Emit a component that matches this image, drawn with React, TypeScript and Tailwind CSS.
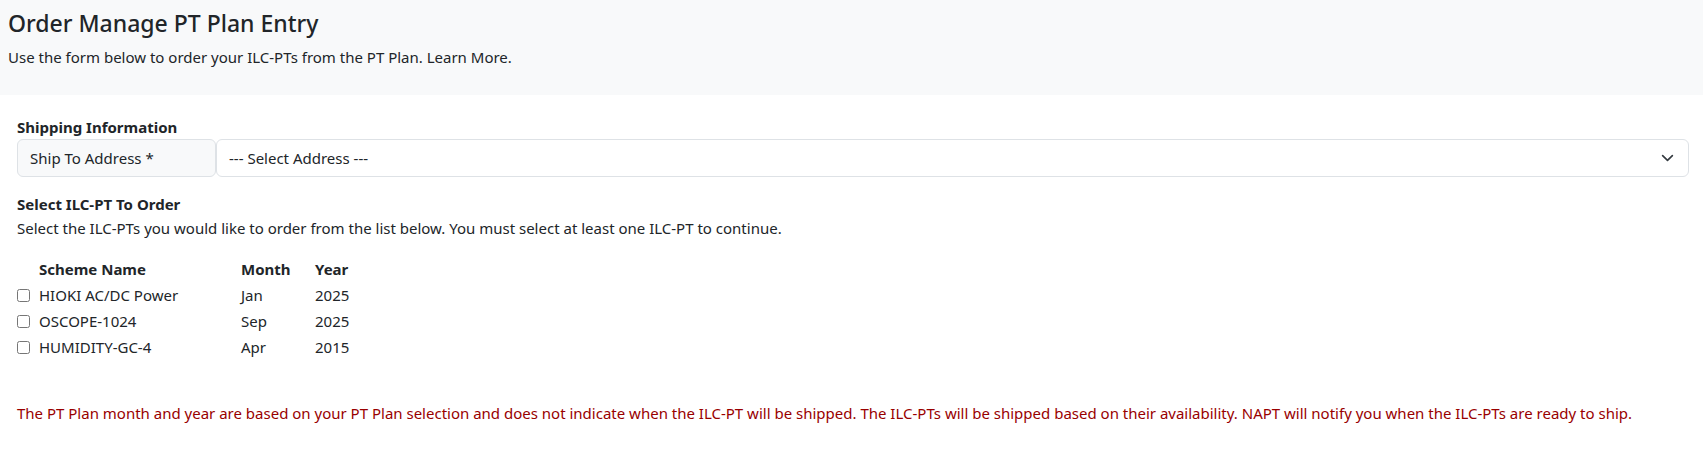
import React, { useState } from "react";

const schemes = [
  { name: "HIOKI AC/DC Power", month: "Jan", year: "2025" },
  { name: "OSCOPE-1024", month: "Sep", year: "2025" },
  { name: "HUMIDITY-GC-4", month: "Apr", year: "2015" },
];

export default function App() {
  const [checked, setChecked] = useState<boolean[]>([false, false, false]);

  return (
    <div className="min-h-screen bg-white text-[#212529] font-['Noto_Sans',sans-serif]">
      <header className="bg-[#f8f9fa] px-2 pt-[9px] pb-[26px]">
        <h1 className="text-[23px] leading-[28px] font-medium">Order Manage PT Plan Entry</h1>
        <p className="mt-[8px] text-[15px] leading-6">
          Use the form below to order your ILC-PTs from the PT Plan. Learn More.
        </p>
      </header>

      <main className="pl-[17px] pr-[14px] pt-[20px]">
        <h2 className="text-[15px] leading-6 font-bold">Shipping Information</h2>
        <div className="flex h-[38px]">
          <div className="flex w-[199px] items-center rounded-md border border-[#dee2e6] bg-[#f8f9fa] px-3 text-[15px]">
            Ship To Address *
          </div>
          <div className="relative flex flex-1 items-center rounded-md border border-[#dee2e6] bg-white px-3 text-[15px]">
            --- Select Address ---
            <svg
              className="absolute right-[14px] top-1/2 -translate-y-1/2"
              width="13"
              height="13"
              viewBox="0 0 16 16"
              fill="none"
              stroke="#343a40"
              strokeWidth="2"
              strokeLinecap="round"
              strokeLinejoin="round"
            >
              <path d="m2 5 6 6 6-6" />
            </svg>
          </div>
        </div>

        <h2 className="mt-[15px] text-[15px] leading-6 font-bold">Select ILC-PT To Order</h2>
        <p className="text-[15px] leading-6">
          Select the ILC-PTs you would like to order from the list below. You must select at least one ILC-PT to continue.
        </p>

        <div className="mt-[16px] grid w-max grid-cols-[22px_202px_74px_60px] text-[15px] leading-[26px]">
          <div />
          <div className="font-bold">Scheme Name</div>
          <div className="font-bold">Month</div>
          <div className="font-bold">Year</div>
          {schemes.map((s, i) => (
            <React.Fragment key={s.name}>
              <div className="flex items-center">
                <input
                  type="checkbox"
                  className="h-[13px] w-[13px] accent-[#0d6efd]"
                  checked={checked[i]}
                  onChange={() => setChecked(checked.map((c, j) => (j === i ? !c : c)))}
                />
              </div>
              <div>{s.name}</div>
              <div>{s.month}</div>
              <div>{s.year}</div>
            </React.Fragment>
          ))}
        </div>

        <p className="mt-[41px] text-[15px] leading-6 text-[#990000]">
          The PT Plan month and year are based on your PT Plan selection and does not indicate when the ILC-PT will be shipped. The ILC-PTs will be shipped based on their availability. NAPT will notify you when the ILC-PTs are ready to ship.
        </p>
      </main>
    </div>
  );
}
